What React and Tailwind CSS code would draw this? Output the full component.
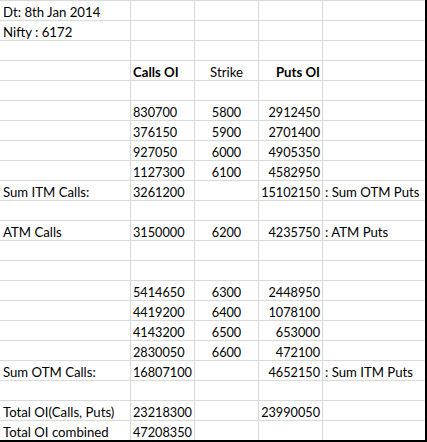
const rows = [
  ["Dt: 8th Jan 2014", "", "", "", ""],
  ["Nifty : 6172", "", "", "", ""],
  ["", "", "", "", ""],
  ["", "Calls OI", "Strike", "Puts OI", ""],
  ["", "", "", "", ""],
  ["", "830700", "5800", "2912450", ""],
  ["", "376150", "5900", "2701400", ""],
  ["", "927050", "6000", "4905350", ""],
  ["", "1127300", "6100", "4582950", ""],
  ["Sum ITM Calls:", "3261200", "", "15102150", ": Sum OTM Puts"],
  ["", "", "", "", ""],
  ["ATM Calls", "3150000", "6200", "4235750", ": ATM Puts"],
  ["", "", "", "", ""],
  ["", "", "", "", ""],
  ["", "5414650", "6300", "2448950", ""],
  ["", "4419200", "6400", "1078100", ""],
  ["", "4143200", "6500", "653000", ""],
  ["", "2830050", "6600", "472100", ""],
  ["Sum OTM Calls:", "16807100", "", "4652150", ": Sum ITM Puts"],
  ["", "", "", "", ""],
  ["Total OI(Calls, Puts)", "23218300", "", "23990050", ""],
  ["Total OI combined", "47208350", "", "", ""],
];

// numbers a touch smaller so the digit widths line up like Calibri's
const size = (v) => (/^\d+$/.test(v) ? "text-[12.7px]" : "text-[13.2px]");

const App = () => {
  return (
    <div
      className="w-[427px] bg-white text-black leading-4 border-r-2 border-b-2 border-black"
      style={{ fontFamily: "Lato, 'Open Sans', sans-serif" }}
    >
      {rows.map((row, i) => {
        const header = i === 3;
        return (
          <div key={i} className="flex h-5 border-t border-[#d9d9d9]">
            {/* A: labels */}
            <div className="w-[131px] flex items-end pl-[3px] text-[13.2px] border-r border-[#d9d9d9] whitespace-nowrap">
              {row[0]}
            </div>
            {/* B: calls OI */}
            <div
              className={`w-16 flex items-end pl-[2px] border-r border-[#d9d9d9] ${size(row[1])} ${
                header ? "font-bold" : ""
              }`}
            >
              {row[1]}
            </div>
            {/* C: strike */}
            <div
              className={`w-16 flex items-end justify-center border-r border-[#d9d9d9] ${size(row[2])}`}
            >
              {row[2]}
            </div>
            {/* D: puts OI */}
            <div
              className={`w-16 flex items-end justify-end pr-[2px] border-r border-[#d9d9d9] ${size(row[3])} ${
                header ? "font-bold" : ""
              }`}
            >
              {row[3]}
            </div>
            {/* E: notes */}
            <div className="flex-1 flex items-end pl-[2px] text-[13.2px] whitespace-nowrap overflow-hidden">
              {row[4]}
            </div>
          </div>
        );
      })}
    </div>
  );
};

export default App;
